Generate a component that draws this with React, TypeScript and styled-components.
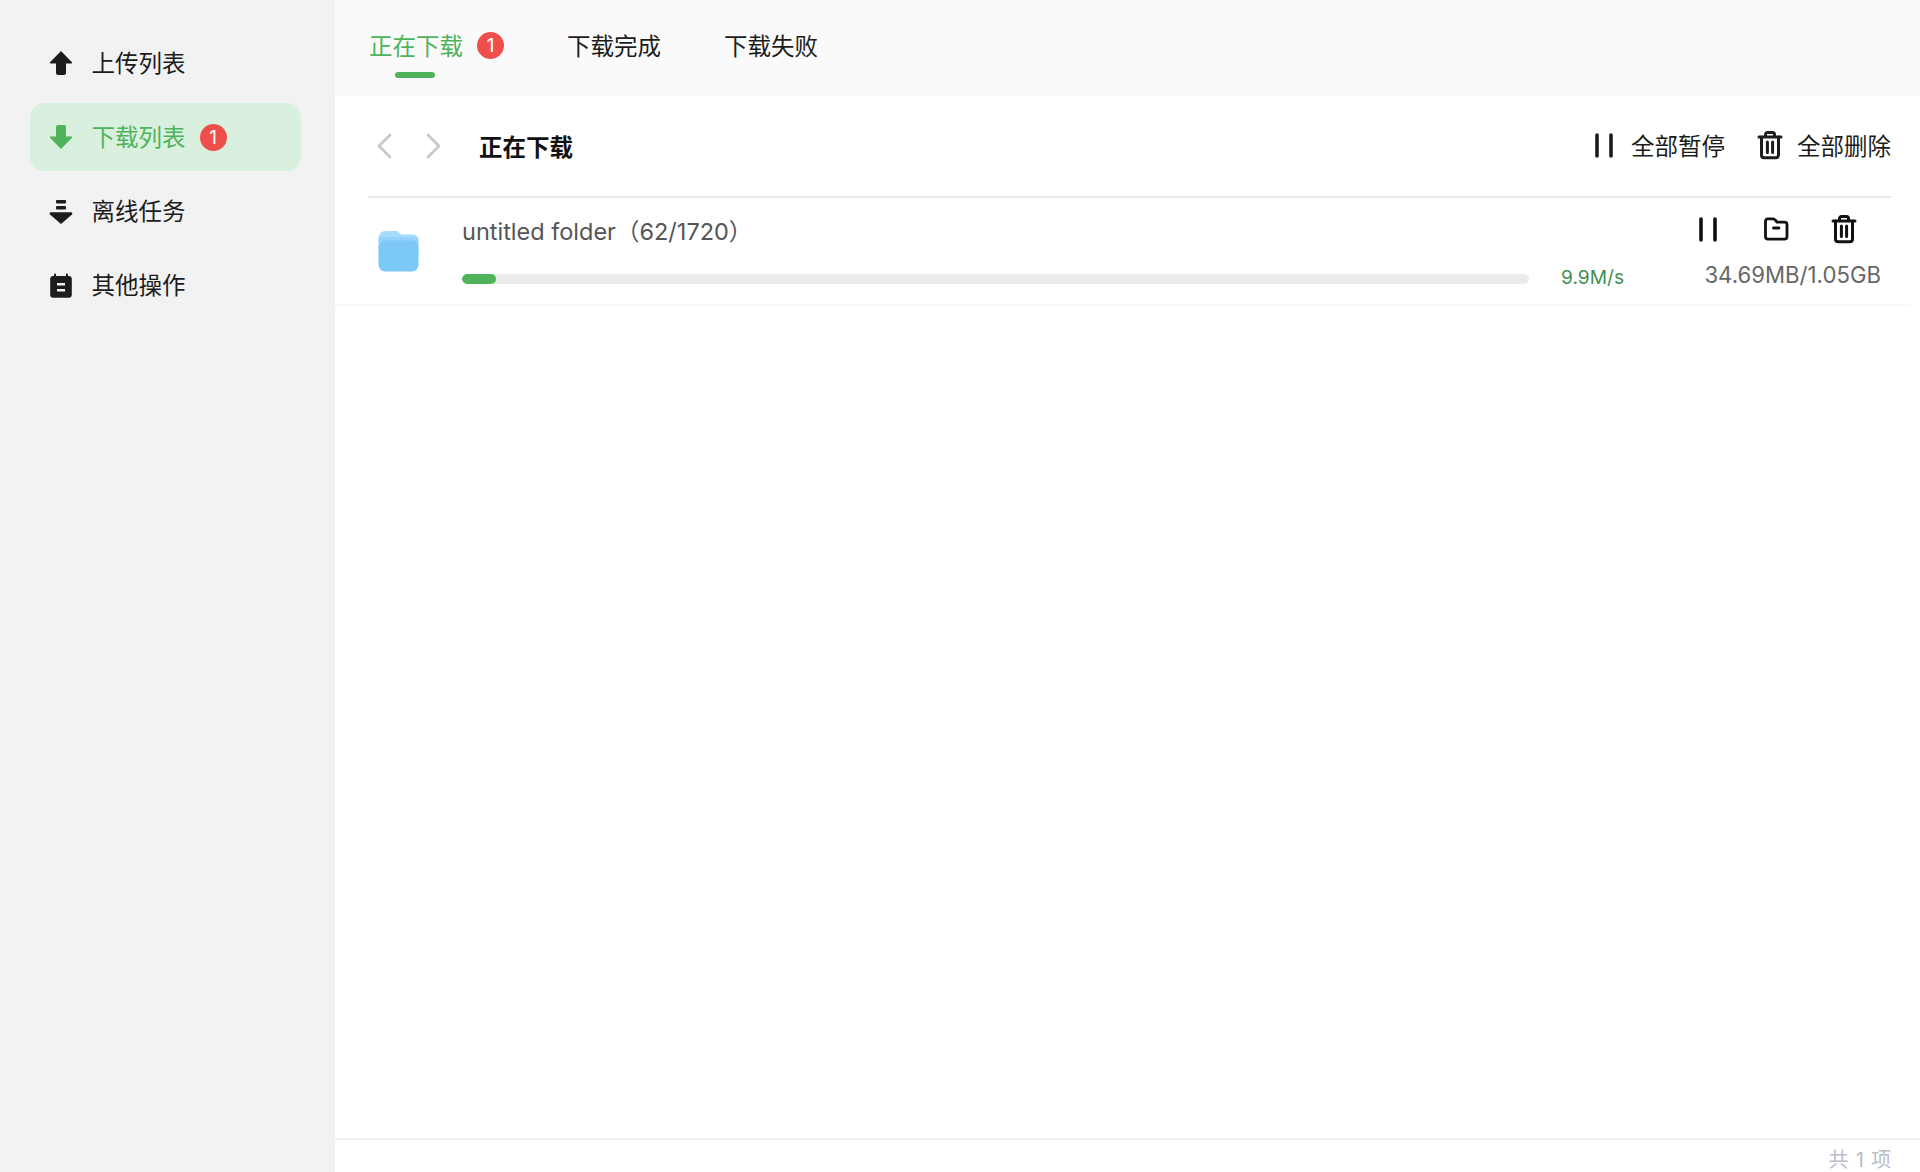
import React from "react"
import styled, { createGlobalStyle } from "styled-components"

const GlobalStyle = createGlobalStyle`
  html, body {
    margin: 0;
    padding: 0;
    background: #fff;
  }
  body {
    font-family: Inter, "Noto Sans CJK SC", "Noto Sans", sans-serif;
    color: #1a1a1a;
  }
`

const Shell = styled.div`
  display: grid;
  grid-template-columns: 335px 1fr;
  height: 1172px;
  overflow: hidden;
`

const Sidebar = styled.nav`
  background: #f2f2f2;
  padding: 29px 34px 0 30px;
  display: flex;
  flex-direction: column;
  gap: 6.3px;
`

const NavItem = styled.div<{ $active?: boolean }>`
  height: 68px;
  border-radius: 14px;
  display: flex;
  align-items: center;
  padding-left: 19px;
  font-size: 23.5px;
  background: ${(p) => (p.$active ? "#d9f0de" : "transparent")};
  color: ${(p) => (p.$active ? "#4fb35c" : "#1c1c1c")};
`

const NavIcon = styled.svg`
  width: 24px;
  height: 26px;
  margin-right: 18.5px;
  flex: none;
`

const NavLabel = styled.span`
  padding-bottom: 3px;
`

const Badge = styled.span`
  width: 27px;
  height: 27px;
  border-radius: 50%;
  background: #ef4f4a;
  color: #fff;
  font-size: 19px;
  display: inline-flex;
  align-items: center;
  justify-content: center;
  margin-left: 14px;
`

const Main = styled.main`
  display: flex;
  flex-direction: column;
  min-width: 0;
`

const TabBar = styled.div`
  height: 96px;
  background: #fafafa;
  display: flex;
  align-items: flex-start;
  padding: 29px 0 0 34px;
  box-sizing: border-box;
  gap: 63px;
`

const Tab = styled.div<{ $active?: boolean }>`
  display: flex;
  align-items: center;
  height: 32px;
  font-size: 23.5px;
  color: ${(p) => (p.$active ? "#4fb35c" : "#1c1c1c")};
`

const TabLabel = styled.span<{ $active?: boolean }>`
  position: relative;
  &::after {
    content: "";
    display: ${(p) => (p.$active ? "block" : "none")};
    position: absolute;
    left: 26px;
    bottom: -16px;
    width: 40px;
    height: 6px;
    border-radius: 3px;
    background: #4fb35c;
  }
`

const Toolbar = styled.div`
  height: 100px;
  margin: 0 29px 0 33px;
  border-bottom: 2px solid #e8e8e8;
  display: flex;
  align-items: center;
  box-sizing: content-box;
`

const Pager = styled.div`
  display: flex;
  align-items: center;
  gap: 34px;
  padding-left: 8px;
  margin-right: 37px;
`

const Chevron = styled.svg`
  width: 16px;
  height: 26px;
  display: block;
`

const Title = styled.div`
  font-size: 23.5px;
  font-weight: 700;
  color: #111;
  flex: 1;
`

const ToolButton = styled.div`
  display: flex;
  align-items: center;
  font-size: 23.5px;
  color: #1c1c1c;
  margin-left: 31px;
  position: relative;
  top: -1px;
`

const ToolIcon = styled.svg`
  width: 28px;
  height: 30px;
  margin-right: 13px;
  flex: none;
`

const Row = styled.div`
  height: 106px;
  margin-right: 9px;
  border-bottom: 2px solid #f8f8f8;
  display: grid;
  grid-template-columns: 127px 1067px 1fr;
  align-items: start;
  box-sizing: content-box;
`

const FolderCell = styled.div`
  padding: 33px 0 0 43px;
`

const FolderIcon = styled.svg`
  width: 41px;
  height: 41px;
  display: block;
`

const Info = styled.div`
  display: flex;
  flex-direction: column;
  padding-top: 18px;
`

const Name = styled.div`
  font-size: 23.5px;
  line-height: 32px;
  color: #555;
`

const Track = styled.div`
  height: 10px;
  border-radius: 5px;
  background: #ebebeb;
  margin-top: 26px;
  overflow: hidden;
`

const Fill = styled.div`
  height: 100%;
  border-radius: 5px;
  background: #4fb35c;
`

const Side = styled.div`
  display: grid;
  grid-template-columns: 101px 1fr;
  align-items: start;
`

const Speed = styled.div`
  font-size: 19.2px;
  line-height: 24px;
  color: #428f52;
  margin: 67px 0 0 32px;
  white-space: nowrap;
`

const Transfer = styled.div`
  display: flex;
  flex-direction: column;
  align-items: flex-end;
  padding-right: 30px;
`

const RowActions = styled.div`
  display: flex;
  align-items: center;
  gap: 40px;
  height: 30px;
  margin: 16px 23px 0 0;
`

const RowIcon = styled.svg`
  width: 28px;
  height: 30px;
  display: block;
  color: #111;
`

const Size = styled.div`
  font-size: 22.2px;
  line-height: 30px;
  color: #666;
  margin-top: 16px;
  white-space: nowrap;
`

const Content = styled.div`
  flex: 1;
`

const Footer = styled.div`
  height: 27px;
  border-top: 2px solid #efefef;
  display: flex;
  align-items: center;
  justify-content: flex-end;
  padding: 5px 29px 0 0;
  box-sizing: content-box;
  font-size: 20px;
  word-spacing: 1.5px;
  color: #b9bccb;
  white-space: pre;
`

const UpArrow = () => (
  <path d="M12 1 L23 12.2 C23.4 12.7 23.1 13.4 22.4 13.4 H17 V23 C17 24.2 16 25 15 25 H9 C8 25 7 24.2 7 23 V13.4 H1.6 C.9 13.4 .6 12.7 1 12.2 Z" fill="currentColor" />
)

const DownArrow = () => (
  <path d="M12 25 L23 13.8 C23.4 13.3 23.1 12.6 22.4 12.6 H17 V3 C17 1.8 16 1 15 1 H9 C8 1 7 1.8 7 3 V12.6 H1.6 C.9 12.6 .6 13.3 1 13.8 Z" fill="currentColor" />
)

const OfflineArrow = () => (
  <>
    <rect x="7" y="1" width="10" height="3.4" rx="1" fill="currentColor" />
    <rect x="7" y="7" width="10" height="3.4" rx="1" fill="currentColor" />
    <path d="M12 25 L23 15.4 C23.6 14.8 23.2 13.2 22.4 13.2 H1.6 C.8 13.2 .4 14.8 1 15.4 Z" fill="currentColor" />
  </>
)

const TaskIcon = () => (
  <path
    fillRule="evenodd"
    d="M5 1.5 C5 .8 5.5 .4 6 .4 C6.6 .4 7 .8 7 1.5 V3 H17 V1.5 C17 .8 17.5 .4 18 .4 C18.6 .4 19 .8 19 1.5 V3 H20 C21.6 3 22.8 4.2 22.8 5.8 V22 C22.8 23.6 21.6 24.8 20 24.8 H4 C2.4 24.8 1.2 23.6 1.2 22 V5.8 C1.2 4.2 2.4 3 4 3 H5 Z M8 10 V12.4 H16 V10 Z M8 16 V18.4 H16 V16 Z"
    fill="currentColor"
  />
)

const PauseGlyph = () => (
  <g stroke="currentColor" strokeWidth="3.6" strokeLinecap="round">
    <line x1="7" y1="5" x2="7" y2="26" />
    <line x1="21" y1="5" x2="21" y2="26" />
  </g>
)

const TrashGlyph = () => (
  <g stroke="currentColor" strokeWidth="3" fill="none" strokeLinecap="round" strokeLinejoin="round">
    <path d="M3 7 H25" />
    <path d="M9.5 6.5 V4.5 C9.5 3.2 10.5 2.4 11.5 2.4 H16.5 C17.5 2.4 18.5 3.2 18.5 4.5 V6.5" />
    <path d="M5.5 7 V25 C5.5 26.6 6.6 27.8 8.2 27.8 H19.8 C21.4 27.8 22.5 26.6 22.5 25 V7" />
    <path d="M11.4 12 V22.5 M16.6 12 V22.5" />
  </g>
)

const FolderGlyph = () => (
  <g stroke="currentColor" strokeWidth="2.8" fill="none" strokeLinecap="round" strokeLinejoin="round">
    <path d="M3.5 7.5 C3.5 5.8 4.6 4.8 6 4.8 H11 C12 4.8 12.6 5.2 13.2 6 L15 8.2 H22.5 C24 8.2 25 9.4 25 10.8 V22.5 C25 24 24 25.2 22.5 25.2 H6 C4.6 25.2 3.5 24 3.5 22.5 Z" />
    <path d="M11.5 14 H17" />
  </g>
)

function App() {
  return (
    <Shell>
      <GlobalStyle />
      <Sidebar>
        <NavItem>
          <NavIcon viewBox="0 0 24 26"><UpArrow /></NavIcon>
          <NavLabel>上传列表</NavLabel>
        </NavItem>
        <NavItem $active>
          <NavIcon viewBox="0 0 24 26"><DownArrow /></NavIcon>
          <NavLabel>下载列表</NavLabel>
          <Badge>1</Badge>
        </NavItem>
        <NavItem>
          <NavIcon viewBox="0 0 24 26"><OfflineArrow /></NavIcon>
          <NavLabel>离线任务</NavLabel>
        </NavItem>
        <NavItem>
          <NavIcon viewBox="0 0 24 26"><TaskIcon /></NavIcon>
          <NavLabel>其他操作</NavLabel>
        </NavItem>
      </Sidebar>
      <Main>
        <TabBar>
          <Tab $active>
            <TabLabel $active>正在下载</TabLabel>
            <Badge>1</Badge>
          </Tab>
          <Tab><TabLabel>下载完成</TabLabel></Tab>
          <Tab><TabLabel>下载失败</TabLabel></Tab>
        </TabBar>
        <Toolbar>
          <Pager>
            <Chevron viewBox="0 0 16 26">
              <path d="M14 2 L3 13 L14 24" stroke="#c8c8c8" strokeWidth="2.8" fill="none" strokeLinecap="round" strokeLinejoin="round" />
            </Chevron>
            <Chevron viewBox="0 0 16 26">
              <path d="M2 2 L13 13 L2 24" stroke="#c8c8c8" strokeWidth="2.8" fill="none" strokeLinecap="round" strokeLinejoin="round" />
            </Chevron>
          </Pager>
          <Title>正在下载</Title>
          <ToolButton>
            <ToolIcon viewBox="0 0 28 30"><PauseGlyph /></ToolIcon>
            全部暂停
          </ToolButton>
          <ToolButton>
            <ToolIcon viewBox="0 0 28 30"><TrashGlyph /></ToolIcon>
            全部删除
          </ToolButton>
        </Toolbar>
        <Row>
          <FolderCell>
            <FolderIcon viewBox="0 0 40 41">
              <path d="M0 8 C0 3.5 3 0 7 0 H17 C20 0 21 2.5 23 3.5 H34 C37.5 3.5 40 6 40 10 V20 H0 Z" fill="#a6dcfb" />
              <rect x="0" y="6" width="40" height="6" rx="3" fill="#94d2fa" />
              <rect x="0" y="9.5" width="40" height="31" rx="6.5" fill="#7cc8f8" />
            </FolderIcon>
          </FolderCell>
          <Info>
            <Name>untitled folder（62/1720）</Name>
            <Track>
              <Fill style={{ width: `${(34 / 1067) * 100}%` }} />
            </Track>
          </Info>
          <Side>
            <Speed>9.9M/s</Speed>
            <Transfer>
              <RowActions>
                <RowIcon viewBox="0 0 28 30"><PauseGlyph /></RowIcon>
                <RowIcon viewBox="0 0 28 30"><FolderGlyph /></RowIcon>
                <RowIcon viewBox="0 0 28 30"><TrashGlyph /></RowIcon>
              </RowActions>
              <Size>34.69MB/1.05GB</Size>
            </Transfer>
          </Side>
        </Row>
        <Content />
        <Footer>共 1 项</Footer>
      </Main>
    </Shell>
  )
}

export default App
